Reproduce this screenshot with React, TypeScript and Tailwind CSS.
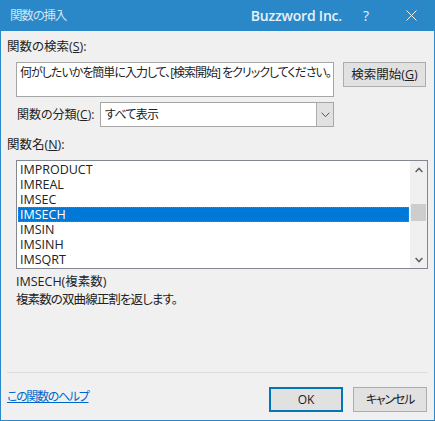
const rows = ["IMPRODUCT", "IMREAL", "IMSEC", "IMSECH", "IMSIN", "IMSINH", "IMSQRT"];

export default function App() {
  return (
    <div className="font-['Open_Sans','Noto_Sans_CJK_JP',sans-serif] [font-feature-settings:'palt'] w-[435px] h-[421px] flex flex-col bg-[#f0f0f0] border border-t-0 border-[#2b88c8] text-[12px] leading-[15px] text-[#222] overflow-hidden">
      {/* Title bar */}
      <div className="h-[31px] -mx-px bg-[#2b88c8] flex items-center text-white shrink-0">
        <span className="ml-[10px] text-[12.5px] tracking-[-1.2px] text-[#cfe5f4] flex-1">関数の挿入</span>
        <span className="text-[14px] font-semibold tracking-[-0.2px] text-[#e6f2fa]">Buzzword Inc.</span>
        <span className="ml-[17px] w-[14px] text-center text-[14px] text-[#e6f2fa]">?</span>
        <svg className="ml-[33px] mr-[18px]" width="11" height="11" viewBox="0 0 11 11" fill="none" stroke="#eef6fb" strokeWidth="1">
          <path d="M0.5 0.5 10.5 10.5M10.5 0.5 0.5 10.5" />
        </svg>
      </div>

      <div className="flex-1 flex flex-col pl-[6px] pr-[6px]">
        <div className="mt-[8px] h-[15px] text-[12.5px]">関数の検索(<span className="underline">S</span>):</div>

        {/* Search */}
        <div className="mt-[8px] ml-[9px] flex items-start">
          <div className="w-[318px] h-[35px] bg-white border border-[#a6a6a6] pl-[3px] pt-[2px] tracking-[-1px] whitespace-nowrap overflow-hidden">
            何がしたいかを簡単に入力して、[検索開始] をクリックしてください。
          </div>
          <div className="ml-[9px] w-[83px] h-[25px] bg-[#e1e1e1] border border-[#adadad] flex items-center justify-center text-[12.5px]">
            検索開始(<span className="underline">G</span>)
          </div>
        </div>

        {/* Category */}
        <div className="mt-[5px] ml-[10px] flex items-center h-[25px]">
          <span className="w-[83px] whitespace-nowrap">関数の分類(<span className="underline">C</span>):</span>
          <div className="w-[234px] h-[25px] bg-white border border-[#a6a6a6] flex items-center pl-[4px] justify-between">
            <span className="tracking-[-0.7px]">すべて表示</span>
            <div className="w-[17px] h-[23px] bg-[#e1e1e1] border-l border-[#adadad] flex items-center justify-center">
              <svg width="9" height="6" viewBox="0 0 9 6" fill="none" stroke="#555" strokeWidth="1">
                <path d="M0.7 0.7 4.5 4.7 8.3 0.7" />
              </svg>
            </div>
          </div>
        </div>

        <div className="mt-[10px] h-[15px] text-[12.5px]">関数名(<span className="underline">N</span>):</div>

        {/* List */}
        <div className="mt-[8px] ml-[9px] w-[412px] h-[109px] bg-white border border-[#828790] flex">
          <div className="flex-1 pl-px pt-px flex flex-col">
            {rows.map((r) =>
              r === "IMSECH" ? (
                <div key={r} className="h-[15px] pl-[2px] mr-px bg-[#0078d7] text-white text-[12.5px] outline-1 -outline-offset-1 outline-dotted outline-[#5a7fa8]">{r}</div>
              ) : (
                <div key={r} className="h-[15px] pl-[2px] text-[12.5px]">{r}</div>
              )
            )}
          </div>
          <div className="w-[17px] bg-[#f0f0f0] flex flex-col items-center">
            <div className="h-[17px] flex items-center justify-center">
              <svg width="8" height="6" viewBox="0 0 8 6" fill="none" stroke="#606060" strokeWidth="1.5"><path d="M0.6 5 4 1.4 7.4 5" /></svg>
            </div>
            <div className="w-[15px] h-[17px] bg-[#cdcdcd] mt-[26px]" />
            <div className="h-[17px] flex items-center justify-center mt-auto">
              <svg width="8" height="6" viewBox="0 0 8 6" fill="none" stroke="#606060" strokeWidth="1.5"><path d="M0.6 1 4 4.6 7.4 1" /></svg>
            </div>
          </div>
        </div>

        <div className="mt-[3px] ml-[9px] h-[18px] flex items-center text-[12.5px]">IMSECH(複素数)</div>
        <div className="ml-[9px] h-[18px] flex items-center text-[12.5px] tracking-[-0.9px]">複素数の双曲線正割を返します。</div>

        <div className="mt-[64px] h-px w-[421px] bg-[#dcdcdc]" />

        {/* Footer */}
        <div className="flex items-start mt-[14px]">
          <span className="mt-[2px] text-[#0066cc] underline whitespace-nowrap tracking-[-1.3px]">この関数のヘルプ</span>
          <div className="ml-auto flex gap-[10px] mr-[1px]">
            <div className="w-[74px] h-[25px] bg-[#e1e1e1] border-2 border-[#0078b8] flex items-center justify-center">OK</div>
            <div className="w-[74px] h-[25px] bg-[#e1e1e1] border border-[#adadad] flex items-center justify-center tracking-[-1.2px]">キャンセル</div>
          </div>
        </div>
      </div>
    </div>
  );
}
